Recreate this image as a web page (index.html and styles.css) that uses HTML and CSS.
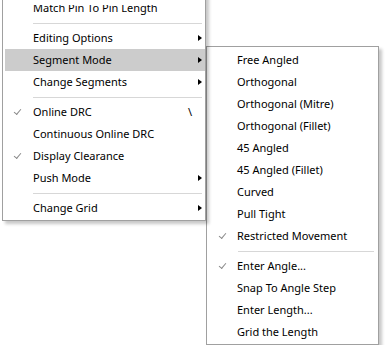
FILE: index.html
```html
<!DOCTYPE html>
<html lang="en">
<head>
  <meta charset="UTF-8" />
  <title>Segment Mode menu</title>
  <link rel="stylesheet" href="styles.css">
</head>
<body>
  <div class="menus">
    <ul class="menu menu-main">
      <li class="item">Match Pin To Pin Length</li>
      <li class="sep"></li>
      <li class="item has-sub">Editing Options</li>
      <li class="item has-sub active">Segment Mode</li>
      <li class="item has-sub">Change Segments</li>
      <li class="sep"></li>
      <li class="item checked">Online DRC <span class="key">\</span></li>
      <li class="item">Continuous Online DRC</li>
      <li class="item checked">Display Clearance</li>
      <li class="item has-sub">Push Mode</li>
      <li class="sep"></li>
      <li class="item has-sub">Change Grid</li>
    </ul>

    <ul class="menu menu-sub">
      <li class="item">Free Angled</li>
      <li class="item">Orthogonal</li>
      <li class="item">Orthogonal (Mitre)</li>
      <li class="item">Orthogonal (Fillet)</li>
      <li class="item">45 Angled</li>
      <li class="item">45 Angled (Fillet)</li>
      <li class="item">Curved</li>
      <li class="item">Pull Tight</li>
      <li class="item checked">Restricted Movement</li>
      <li class="sep"></li>
      <li class="item checked">Enter Angle...</li>
      <li class="item">Snap To Angle Step</li>
      <li class="item">Enter Length...</li>
      <li class="item">Grid the Length</li>
    </ul>
  </div>
</body>
</html>
```

FILE: styles.css
```css
body { margin: 0; background: #fff; font-family: "Noto Sans", "Open Sans", sans-serif; font-size: 11px; color: #000; overflow: hidden; }
.menus { display: flex; align-items: flex-start; }
.menu {
  list-style: none;
  margin: 0;
  padding: 2px 0 1px 0;
  background: #fff;
  border: 1px solid #a0a0a0;
  box-shadow: 3px 3px 3px rgba(0,0,0,0.22);
}
.menu-main { position: relative; width: 202px; margin: -6px 0 0 2px; }
/* the top of the list is scrolled under the window edge */
.menu-main::before {
  content: "";
  position: absolute;
  top: 0;
  left: 0;
  right: 0;
  height: 10px;
  background: #fff;
  z-index: 1;
}
.menu-sub { width: 171px; margin-top: 46px; }
.item {
  position: relative;
  height: 22px;
  line-height: 22px;
  padding-left: 30px;
  white-space: nowrap;
}
.sep { height: 8px; position: relative; }
.sep::after {
  content: "";
  position: absolute;
  left: 30px;
  right: 3px;
  top: 4px;
  height: 1px;
  background: #d7d7d7;
}
.menu-sub .sep::after { left: 31px; right: 4px; }
.active { background: #cccccc; margin: 0 0 0 2px; padding-left: 28px; }
.has-sub::after {
  content: "";
  position: absolute;
  right: 3px;
  top: 8px;
  border-left: 4px solid #000;
  border-top: 3.5px solid transparent;
  border-bottom: 3.5px solid transparent;
}
.checked::before {
  content: "";
  position: absolute;
  left: 11px;
  top: 8px;
  width: 6px;
  height: 3px;
  border-left: 1.5px solid #8a8a8a;
  border-bottom: 1.5px solid #8a8a8a;
  transform: rotate(-50deg);
}
.menu-sub .checked::before { left: 12px; }
.key { position: absolute; right: 13px; }
```
